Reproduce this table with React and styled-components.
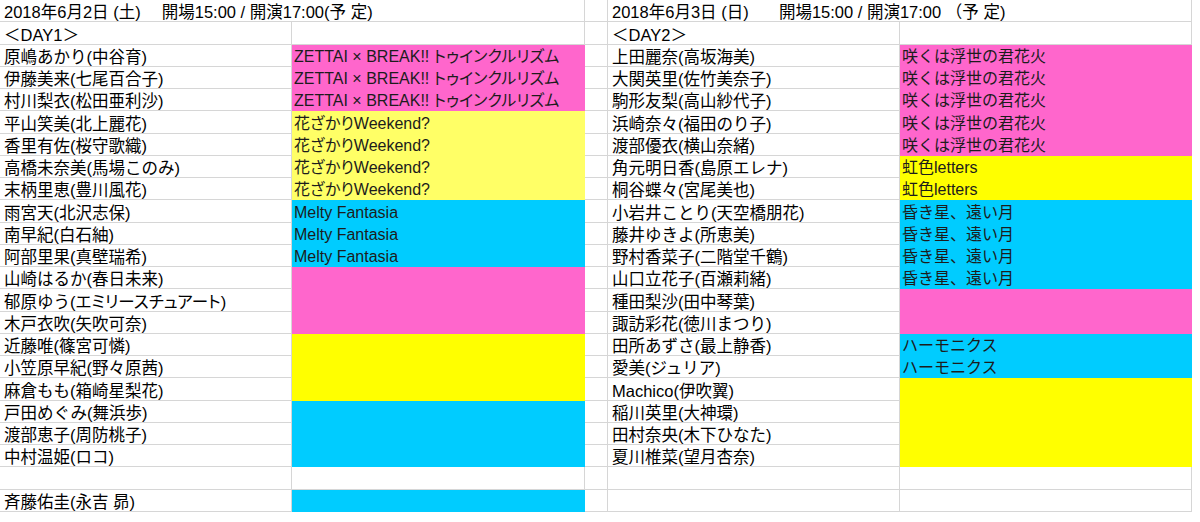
import React from "react";
import styled, { createGlobalStyle } from "styled-components";

const GlobalStyle = createGlobalStyle`
    body{
        margin:0;
        background:#fff;
    }
`;

const LINE = "#d6d6d6";

const FILLS = {
    pink: "#ff66cc",
    lemon: "#ffff66",
    yellow: "#ffff00",
    blue: "#00ccff",
};

const Sheet = styled.div`
    display:grid;
    grid-template-columns:292px 293px 23px 292px 292px;
    grid-auto-rows:22.25px;
    width:1192px;
    font-family:"Liberation Sans","Noto Sans CJK JP",sans-serif;
    font-size:16.5px;
    color:#000;
`;

const Cell = styled.div`
    box-sizing:border-box;
    display:flex;
    align-items:flex-end;
    padding-left:${props => props.$pad ?? 4}px;
    line-height:18px;
    white-space:pre;
    min-width:0;
    grid-column:span ${props => props.$span || 1};
    background:${props => props.$fill || "#fff"};
    border-right:1px solid ${props => props.$fill || LINE};
    border-bottom:1px solid ${props => props.$fill || LINE};
`;

const Song = styled(Cell)`
    font-size:16px;
    color:#1c1c1c;
`;

// proportional kana, like the sheet's P-gothic font
const Kana = styled.span`
    font-feature-settings:"palt";
`;

const SONGS = {
    zettai: {fill: FILLS.pink, label: <>ZETTAI × BREAK!! <Kana>トゥインクルリズム</Kana></>},
    hana: {fill: FILLS.lemon, label: <><Kana>花ざかり</Kana>Weekend?</>},
    melty: {fill: FILLS.blue, label: "Melty Fantasia"},
    hanabi: {fill: FILLS.pink, label: "咲くは浮世の君花火"},
    niji: {fill: FILLS.yellow, label: "虹色letters"},
    kuraki: {fill: FILLS.blue, label: "昏き星、遠い月"},
    harmo: {fill: FILLS.blue, label: "ハーモニクス"},
    pink: {fill: FILLS.pink},
    yellow: {fill: FILLS.yellow},
    blue: {fill: FILLS.blue},
};

const DAY1 = [
    ["＜DAY1＞"],
    ["原嶋あかり(中谷育)", "zettai"],
    ["伊藤美来(七尾百合子)", "zettai"],
    ["村川梨衣(松田亜利沙)", "zettai"],
    ["平山笑美(北上麗花)", "hana"],
    ["香里有佐(桜守歌織)", "hana"],
    ["高橋未奈美(馬場このみ)", "hana"],
    ["末柄里恵(豊川風花)", "hana"],
    ["雨宮天(北沢志保)", "melty"],
    ["南早紀(白石紬)", "melty"],
    ["阿部里果(真壁瑞希)", "melty"],
    ["山崎はるか(春日未来)", "pink"],
    [<>郁原ゆう(<Kana>エミリースチュアート</Kana>)</>, "pink"],
    ["木戸衣吹(矢吹可奈)", "pink"],
    ["近藤唯(篠宮可憐)", "yellow"],
    ["小笠原早紀(野々原茜)", "yellow"],
    ["麻倉もも(箱崎星梨花)", "yellow"],
    ["戸田めぐみ(舞浜歩)", "blue"],
    ["渡部恵子(周防桃子)", "blue"],
    ["中村温姫(ロコ)", "blue"],
    [""],
    ["斉藤佑圭(永吉 昴)", "blue"],
];

const DAY2 = [
    ["＜DAY2＞"],
    ["上田麗奈(高坂海美)", "hanabi"],
    ["大関英里(佐竹美奈子)", "hanabi"],
    ["駒形友梨(高山紗代子)", "hanabi"],
    ["浜崎奈々(福田のり子)", "hanabi"],
    ["渡部優衣(横山奈緒)", "hanabi"],
    ["角元明日香(島原エレナ)", "niji"],
    ["桐谷蝶々(宮尾美也)", "niji"],
    ["小岩井ことり(天空橋朋花)", "kuraki"],
    ["藤井ゆきよ(所恵美)", "kuraki"],
    ["野村香菜子(二階堂千鶴)", "kuraki"],
    ["山口立花子(百瀬莉緒)", "kuraki"],
    ["種田梨沙(田中琴葉)", "pink"],
    ["諏訪彩花(徳川まつり)", "pink"],
    ["田所あずさ(最上静香)", "harmo"],
    ["愛美(ジュリア)", "harmo"],
    ["Machico(伊吹翼)", "yellow"],
    ["稲川英里(大神環)", "yellow"],
    ["田村奈央(木下ひなた)", "yellow"],
    ["夏川椎菜(望月杏奈)", "yellow"],
    [""],
    [""],
];

const SongCell = ({id}) => {
    const song = SONGS[id] || {};
    return <Song $pad={2} $fill={song.fill}>{song.label}</Song>;
};

const App = () =>
    <>
        <GlobalStyle/>
        <Sheet>
            <Cell $span={2}>2018年6月2日 (土)　 開場15:00 / 開演17:00(予 定)</Cell>
            <Cell/>
            <Cell $span={2}>2018年6月3日 (日)　   開場15:00 / 開演17:00 （予 定)</Cell>
            {DAY1.map(([name, song], i) =>
                <React.Fragment key={i}>
                    <Cell>{name}</Cell>
                    <SongCell id={song}/>
                    <Cell/>
                    <Cell>{DAY2[i][0]}</Cell>
                    <SongCell id={DAY2[i][1]}/>
                </React.Fragment>
            )}
        </Sheet>
    </>

export default App
